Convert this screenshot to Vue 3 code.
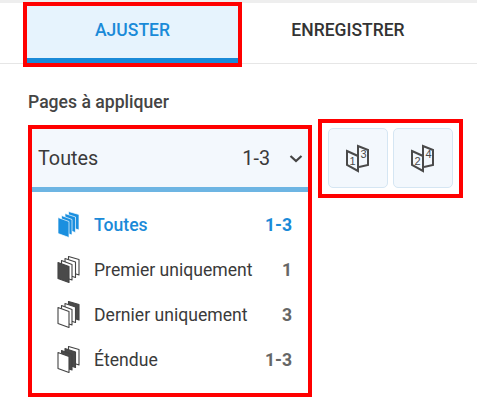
<script setup>
// fill flags run from the back page to the front page
const options = [
  { label: 'Toutes', range: '1-3', active: true, fill: [1, 1, 1, 1] },
  { label: 'Premier uniquement', range: '1', fill: [0, 0, 0, 1] },
  { label: 'Dernier uniquement', range: '3', fill: [1, 0, 0, 0] },
  { label: 'Étendue', range: '1-3', fill: [0, 1, 1, 0] }
]

const pages = [
  'M11.500 0.500 L22 3.500 V19 L11.500 15.500 Z',
  'M8 2.500 L18.500 6 V21.500 L8 18 Z',
  'M4.500 4.500 L15 8.500 V24 L4.500 20.500 Z',
  'M1 6.500 L12 10.500 V26.500 L1 22.500 Z'
]

const pageColor = (opt, i) => {
  if (opt.active) return '#1a8fdf'
  return opt.fill[i] ? '#4a4a4a' : '#fff'
}
</script>

<template>
  <div class="page">
    <div class="strip"></div>
    <div class="tabs">
      <div class="tab active">AJUSTER</div>
      <div class="tab">ENREGISTRER</div>
    </div>

    <div class="title">Pages à appliquer</div>

    <div class="row">
      <div class="dropdown mark">
        <div class="select">
          <span>Toutes</span>
          <span class="select-range">1-3</span>
          <svg class="chevron" width="14" height="8" viewBox="0 0 14 8">
            <path d="M1.500 1 L7 6 L12.500 1" fill="none" stroke="#444" stroke-width="2.200" />
          </svg>
        </div>
        <ul class="list">
          <li v-for="opt in options" :key="opt.label" :class="{ on: opt.active }">
            <svg class="stack" width="23" height="27" viewBox="0 0 23 27">
              <path
                v-for="(d, i) in pages"
                :key="i"
                :d="d"
                :fill="pageColor(opt, i)"
                :stroke="opt.active ? '#fff' : '#444'"
                :stroke-width="opt.active ? 0.7 : 1.1"
                stroke-linejoin="round"
              />
            </svg>
            <span class="label">{{ opt.label }}</span>
            <span class="range">{{ opt.range }}</span>
          </li>
        </ul>
      </div>

      <div class="order mark">
        <button class="order-btn">
          <svg width="24" height="30" viewBox="0 0 24 30">
            <path d="M12 13 V3 L22 7 V22 L13 24" fill="none" stroke="#4a4a4a" stroke-width="2" />
            <path d="M1 8 L12 13 V28 L1 22 Z" fill="#f3f8fd" stroke="#4a4a4a" stroke-width="2" />
            <text x="6.500" y="22" class="num">1</text>
            <text x="17.500" y="15" class="num">3</text>
          </svg>
        </button>
        <button class="order-btn">
          <svg width="24" height="30" viewBox="0 0 24 30">
            <path d="M12 13 V3 L22 7 V22 L13 24" fill="none" stroke="#4a4a4a" stroke-width="2" />
            <path d="M1 8 L12 13 V28 L1 22 Z" fill="#f3f8fd" stroke="#4a4a4a" stroke-width="2" />
            <text x="6.500" y="22" class="num">2</text>
            <text x="17.500" y="15" class="num">4</text>
          </svg>
        </button>
      </div>
    </div>
  </div>
</template>

<style scoped>
.page {
  width: 477px;
  height: 411px;
  overflow: hidden;
  background: #fff;
  font-family: Roboto, "Liberation Sans", sans-serif;
  color: #3a3a3a;
}

.strip {
  height: 3px;
  background: #eee;
}

.tabs {
  display: flex;
  box-sizing: border-box;
  height: 61px;
  padding: 3px 0 0 27px;
  border-bottom: 1px solid #e6e6e6;
}

.tab {
  width: 220px;
  height: 57px;
  line-height: 48px;
  box-sizing: border-box;
  text-align: center;
  font-size: 17.500px;
  font-weight: 500;
  color: #333;
}

.tab.active {
  width: 211px;
  color: #1a8ad8;
  background: #e6f3fd;
  border-bottom: 5px solid #1a8ad8;
  outline: 4px solid #f00;
}

.mark {
  outline: 4px solid #f00;
  outline-offset: -1px;
}

.title {
  margin: 29px 0 0 28px;
  font-size: 17.600px;
  font-weight: 500;
  line-height: 18px;
  color: #444;
}

.row {
  display: flex;
  align-items: flex-start;
  margin: 17px 0 0 31px;
}

.dropdown {
  width: 278px;
  height: 266px;
}

.select {
  display: flex;
  align-items: center;
  height: 57px;
  padding: 2px 6px 0 7px;
  background: #f3f8fd;
  border-bottom: 5px solid #6db5e3;
  font-size: 19.800px;
}

.select-range {
  margin-left: auto;
  margin-right: 19px;
}

.list {
  list-style: none;
  margin: 0;
  padding: 10px 0 0;
}

.list li {
  display: flex;
  align-items: center;
  height: 45px;
  padding: 0 17px 0 26px;
  font-size: 17.600px;
}

.stack {
  margin-right: 14px;
}

.range {
  margin-left: auto;
  font-weight: 700;
  color: #666;
}

.on .label {
  font-weight: 500;
  color: #1a8ad8;
}

.on .range {
  color: #1a8ad8;
}

.order {
  display: flex;
  gap: 5px;
  margin: -6px 0 0 12px;
  padding: 6px 7px 7px;
}

.order-btn {
  display: flex;
  align-items: center;
  justify-content: center;
  width: 60px;
  height: 60px;
  padding: 0;
  background: #f3f8fd;
  border: 1px solid #d5e6f3;
  border-radius: 5px;
}

.num {
  font-size: 11px;
  font-weight: 500;
  fill: #4a4a4a;
  text-anchor: middle;
}
</style>

<style>
html, body {
  margin: 0;
}
</style>
